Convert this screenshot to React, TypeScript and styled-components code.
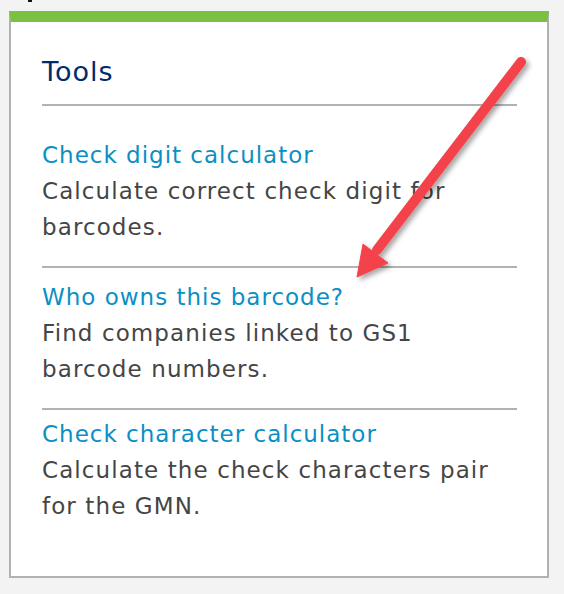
import React from "react";
import styled, { createGlobalStyle } from "styled-components";

const GlobalStyle = createGlobalStyle`
  html, body {
    margin: 0;
    padding: 0;
    background: #f3f3f3;
  }
  body {
    font-family: "DejaVu Sans", "Open Sans", sans-serif;
  }
`;

const Page = styled.div`
  position: relative;
  width: 564px;
  height: 594px;
  padding: 0 0 0 9px;
  box-sizing: border-box;
  overflow: hidden;
`;

const TopMark = styled.div`
  width: 4px;
  height: 2px;
  margin-left: 19px;
  background: #111;
`;

const Card = styled.section`
  margin-top: 9px;
  width: 540px;
  height: 567px;
  box-sizing: border-box;
  background: #ffffff;
  border: 2px solid #b1b1b1;
  border-top: 11px solid #7ac142;
  padding: 32px 30px 0 31px;
`;

const Title = styled.h2`
  margin: 0;
  font-size: 27px;
  font-weight: 400;
  line-height: 36px;
  color: #002c6c;
  letter-spacing: 1px;
  padding-bottom: 14px;
  border-bottom: 2px solid #b1b3b3;
`;

const Item = styled.div<{ $top: number; $last?: boolean }>`
  padding-top: ${(p) => p.$top}px;
  padding-bottom: ${(p) => (p.$last ? "0" : "21px")};
  border-bottom: ${(p) => (p.$last ? "none" : "2px solid #b1b3b3")};
`;

const Link = styled.a`
  display: block;
  font-size: 23px;
  line-height: 36px;
  color: #0a8fc4;
  text-decoration: none;
  letter-spacing: 1px;
`;

const Desc = styled.p`
  margin: 0;
  font-size: 23px;
  line-height: 36px;
  color: #454545;
  letter-spacing: 1.1px;
`;

const Arrow = styled.svg`
  position: absolute;
  left: 0;
  top: 0;
  pointer-events: none;
  overflow: visible;
`;

const items = [
  {
    title: "Check digit calculator",
    desc: ["Calculate correct check digit for", "barcodes."],
    top: 31,
  },
  {
    title: "Who owns this barcode?",
    desc: ["Find companies linked to GS1", "barcode numbers."],
    top: 11,
  },
  {
    title: "Check character calculator",
    desc: ["Calculate the check characters pair", "for the GMN."],
    top: 6,
  },
];

export default function App() {
  return (
    <>
      <GlobalStyle />
      <Page>
        <TopMark />
        <Card>
          <Title>Tools</Title>
          {items.map((it, i) => (
            <Item key={it.title} $top={it.top} $last={i === items.length - 1}>
              <Link href="#">{it.title}</Link>
              <Desc>
                {it.desc[0]}
                <br />
                {it.desc[1]}
              </Desc>
            </Item>
          ))}
        </Card>
        <Arrow width="564" height="594" viewBox="0 0 564 594">
          <defs>
            <filter id="sh" x="-20%" y="-20%" width="140%" height="140%">
              <feDropShadow dx="3" dy="3" stdDeviation="2.5" floodColor="#000" floodOpacity="0.35" />
            </filter>
          </defs>
          <g filter="url(#sh)" fill="#f4434b" stroke="#f4434b">
            <line x1="521" y1="62" x2="377" y2="250" strokeWidth="10" strokeLinecap="round" />
            <polygon points="357,277 363,244 388,263" strokeWidth="1" strokeLinejoin="round" />
          </g>
        </Arrow>
      </Page>
    </>
  );
}
